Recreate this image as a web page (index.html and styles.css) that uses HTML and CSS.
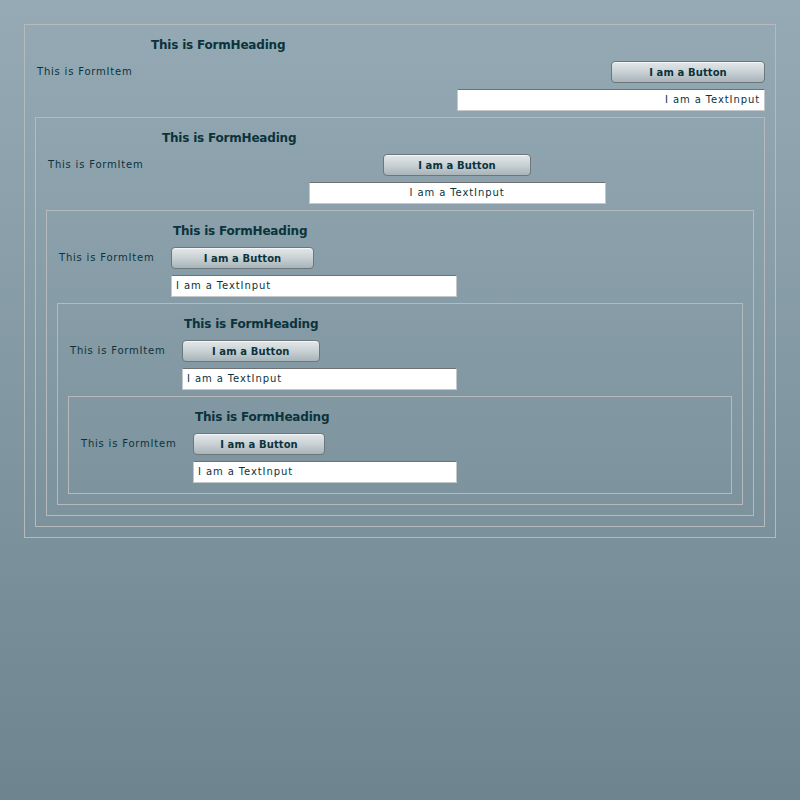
FILE: index.html
```html
<!DOCTYPE html>
<html>
<head>
<meta charset="utf-8">
<link rel="stylesheet" href="styles.css">
</head>
<body>
<div class="form">
  <div class="form-heading">This is FormHeading</div>
  <div class="form-item">
    <div class="label">This is FormItem</div>
    <div class="controls align-right">
      <button class="btn">I am a Button</button>
      <div class="input">I am a TextInput</div>
    </div>
  </div>
  <div class="form">
    <div class="form-heading">This is FormHeading</div>
    <div class="form-item">
      <div class="label">This is FormItem</div>
      <div class="controls align-center">
        <button class="btn">I am a Button</button>
        <div class="input">I am a TextInput</div>
      </div>
    </div>
    <div class="form">
      <div class="form-heading">This is FormHeading</div>
      <div class="form-item">
        <div class="label">This is FormItem</div>
        <div class="controls align-left">
          <button class="btn">I am a Button</button>
          <div class="input">I am a TextInput</div>
        </div>
      </div>
      <div class="form">
        <div class="form-heading">This is FormHeading</div>
        <div class="form-item">
          <div class="label">This is FormItem</div>
          <div class="controls align-left">
            <button class="btn">I am a Button</button>
            <div class="input">I am a TextInput</div>
          </div>
        </div>
        <div class="form">
          <div class="form-heading">This is FormHeading</div>
          <div class="form-item">
            <div class="label">This is FormItem</div>
            <div class="controls align-left">
              <button class="btn">I am a Button</button>
              <div class="input">I am a TextInput</div>
            </div>
          </div>
        </div>
      </div>
    </div>
  </div>
</div>
</body>
</html>
```

FILE: styles.css
```css
html, body {
  margin: 0;
  height: 100%;
}
body {
  background: linear-gradient(to bottom, #95aab4 0%, #6e858f 100%);
  padding: 24px;
  box-sizing: border-box;
  font-family: "DejaVu Sans", Verdana, sans-serif;
  font-size: 10px;
  color: #0b333c;
}
.form {
  border: 1px solid #b7babc;
  padding: 10px;
  display: flex;
  flex-direction: column;
  gap: 6px;
}
.form-heading {
  height: 20px;
  line-height: 20px;
  font-size: 12px;
  font-weight: bold;
  letter-spacing: -0.2px;
  padding-left: 116px;
  white-space: nowrap;
}
.form-item {
  display: flex;
  gap: 14px;
}
.label {
  width: 100px;
  flex: none;
  height: 22px;
  line-height: 22px;
  padding-left: 2px;
  box-sizing: border-box;
  letter-spacing: 0.8px;
  white-space: nowrap;
}
.controls {
  flex: 1;
  display: flex;
  flex-direction: column;
  gap: 6px;
}
.align-right { align-items: flex-end; }
.align-center { align-items: center; }
.align-left { align-items: flex-start; }
.btn {
  width: 25%;
  height: 22px;
  margin: 0;
  padding: 0;
  border: 1px solid #6d777b;
  border-radius: 4px;
  background: linear-gradient(to bottom, #e3e8ea 0%, #c9d1d4 50%, #a8b4b9 100%);
  box-shadow: inset 0 1px 0 rgba(255,255,255,0.6);
  font-family: "DejaVu Sans", Verdana, sans-serif;
  font-size: 10px;
  font-weight: bold;
  letter-spacing: 0.1px;
  line-height: 19px;
  color: #0b333c;
  box-sizing: border-box;
}
.input {
  width: 50%;
  height: 22px;
  line-height: 20px;
  background: #fff;
  border: 1px solid #c4c8ca;
  border-top-color: #6e7173;
  box-sizing: border-box;
  padding: 0 4px;
  letter-spacing: 0.9px;
  white-space: nowrap;
}
.align-right .input { text-align: right; }
.align-center .input { text-align: center; }
.align-left .input { text-align: left; }
```
